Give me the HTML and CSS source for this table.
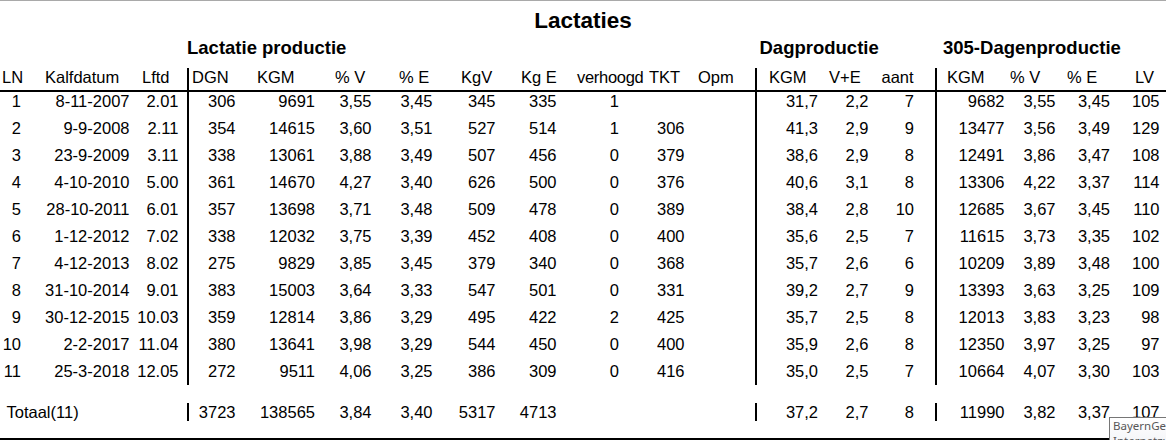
FILE: index.html
```html
<!DOCTYPE html>
<html lang="nl">
<head>
<meta charset="utf-8">
<title>Lactaties</title>
<link rel="stylesheet" href="styles.css">
</head>
<body>
<div class="page">
  <h1 class="title">Lactaties</h1>
  <div class="groups">
    <span></span>
    <span class="g-lact">Lactatie productie</span>
    <span class="g-dag">Dagproductie</span>
    <span class="g-305">305-Dagenproductie</span>
  </div>
  <div class="row head">
    <span>LN</span><span>Kalfdatum</span><span>Lftd</span><span>DGN</span><span>KGM</span><span>% V</span><span>% E</span><span>KgV</span><span>Kg E</span><span>verhoogd</span><span>TKT</span><span>Opm</span><span>KGM</span><span>V+E</span><span>aant</span><span>KGM</span><span>% V</span><span>% E</span><span>LV</span>
  </div>
  <div class="row data"><span>1</span><span>8-11-2007</span><span>2.01</span><span>306</span><span>9691</span><span>3,55</span><span>3,45</span><span>345</span><span>335</span><span>1</span><span></span><span></span><span>31,7</span><span>2,2</span><span>7</span><span>9682</span><span>3,55</span><span>3,45</span><span>105</span></div>
  <div class="row data"><span>2</span><span>9-9-2008</span><span>2.11</span><span>354</span><span>14615</span><span>3,60</span><span>3,51</span><span>527</span><span>514</span><span>1</span><span>306</span><span></span><span>41,3</span><span>2,9</span><span>9</span><span>13477</span><span>3,56</span><span>3,49</span><span>129</span></div>
  <div class="row data"><span>3</span><span>23-9-2009</span><span>3.11</span><span>338</span><span>13061</span><span>3,88</span><span>3,49</span><span>507</span><span>456</span><span>0</span><span>379</span><span></span><span>38,6</span><span>2,9</span><span>8</span><span>12491</span><span>3,86</span><span>3,47</span><span>108</span></div>
  <div class="row data"><span>4</span><span>4-10-2010</span><span>5.00</span><span>361</span><span>14670</span><span>4,27</span><span>3,40</span><span>626</span><span>500</span><span>0</span><span>376</span><span></span><span>40,6</span><span>3,1</span><span>8</span><span>13306</span><span>4,22</span><span>3,37</span><span>114</span></div>
  <div class="row data"><span>5</span><span>28-10-2011</span><span>6.01</span><span>357</span><span>13698</span><span>3,71</span><span>3,48</span><span>509</span><span>478</span><span>0</span><span>389</span><span></span><span>38,4</span><span>2,8</span><span>10</span><span>12685</span><span>3,67</span><span>3,45</span><span>110</span></div>
  <div class="row data"><span>6</span><span>1-12-2012</span><span>7.02</span><span>338</span><span>12032</span><span>3,75</span><span>3,39</span><span>452</span><span>408</span><span>0</span><span>400</span><span></span><span>35,6</span><span>2,5</span><span>7</span><span>11615</span><span>3,73</span><span>3,35</span><span>102</span></div>
  <div class="row data"><span>7</span><span>4-12-2013</span><span>8.02</span><span>275</span><span>9829</span><span>3,85</span><span>3,45</span><span>379</span><span>340</span><span>0</span><span>368</span><span></span><span>35,7</span><span>2,6</span><span>6</span><span>10209</span><span>3,89</span><span>3,48</span><span>100</span></div>
  <div class="row data"><span>8</span><span>31-10-2014</span><span>9.01</span><span>383</span><span>15003</span><span>3,64</span><span>3,33</span><span>547</span><span>501</span><span>0</span><span>331</span><span></span><span>39,2</span><span>2,7</span><span>9</span><span>13393</span><span>3,63</span><span>3,25</span><span>109</span></div>
  <div class="row data"><span>9</span><span>30-12-2015</span><span>10.03</span><span>359</span><span>12814</span><span>3,86</span><span>3,29</span><span>495</span><span>422</span><span>2</span><span>425</span><span></span><span>35,7</span><span>2,5</span><span>8</span><span>12013</span><span>3,83</span><span>3,23</span><span>98</span></div>
  <div class="row data"><span>10</span><span>2-2-2017</span><span>11.04</span><span>380</span><span>13641</span><span>3,98</span><span>3,29</span><span>544</span><span>450</span><span>0</span><span>400</span><span></span><span>35,9</span><span>2,6</span><span>8</span><span>12350</span><span>3,97</span><span>3,25</span><span>97</span></div>
  <div class="row data last"><span>11</span><span>25-3-2018</span><span>12.05</span><span>272</span><span>9511</span><span>4,06</span><span>3,25</span><span>386</span><span>309</span><span>0</span><span>416</span><span></span><span>35,0</span><span>2,5</span><span>7</span><span>10664</span><span>4,07</span><span>3,30</span><span>103</span></div>
  <div class="row data total"><span class="label">Totaal(11)</span><span></span><span></span><span>3723</span><span>138565</span><span>3,84</span><span>3,40</span><span>5317</span><span>4713</span><span></span><span></span><span></span><span>37,2</span><span>2,7</span><span>8</span><span>11990</span><span>3,82</span><span>3,37</span><span>107</span></div>
  <div class="rule"></div>
  <div class="tooltip">BayernGenetik<br>Internetzugang</div>
</div>
</body>
</html>
```
FILE: styles.css
```css
html, body {
  margin: 0;
  padding: 0;
  overflow: hidden;
  background: #fff;
}

body {
  font-family: "Liberation Sans", Arial, sans-serif;
  font-size: 16.5px;
  color: #000;
}

.page {
  position: relative;
  height: 440px;
  box-sizing: border-box;
  border-top: 1px solid #a9a9a9;
}

.title {
  margin: 7px 0 0;
  font-size: 22.5px;
  line-height: 26px;
  font-weight: bold;
  text-align: center;
}

.groups {
  display: grid;
  grid-template-columns: 187px 568px 180px 1fr;
  height: 34px;
  box-sizing: border-box;
  padding-top: 3px;
  font-size: 18.5px;
  line-height: 22px;
  font-weight: bold;
  white-space: nowrap;
}

.g-lact { padding-left: 0; }
.g-dag { padding-left: 4.5px; }
.g-305 { padding-left: 8px; }

.row {
  display: grid;
  grid-template-columns: 26px 107px 54px 53px 80px 60px 60px 60px 65px 80px 45px 65px 70px 50px 60px 75px 54px 54px 48px;
  line-height: 19px;
  white-space: nowrap;
}

.row > span {
  min-width: 0;
}

.row > span:nth-child(4),
.row > span:nth-child(13),
.row > span:nth-child(16) {
  border-left: 2px solid #000;
}

/* header row */
.head {
  height: 22px;
  border-bottom: 2px solid #000;
}

.head > span { text-align: left; }
.head > span:nth-child(1)  { padding-left: 2px; }
.head > span:nth-child(2)  { padding-left: 19px; }
.head > span:nth-child(3)  { padding-left: 9px; }
.head > span:nth-child(4)  { padding-left: 3px; }
.head > span:nth-child(5)  { padding-left: 17px; }
.head > span:nth-child(6)  { padding-left: 15px; }
.head > span:nth-child(7)  { padding-left: 19px; }
.head > span:nth-child(8)  { padding-left: 21px; }
.head > span:nth-child(9)  { padding-left: 21px; }
.head > span:nth-child(10) { padding-left: 12px; letter-spacing: -0.3px; }
.head > span:nth-child(11) { padding-left: 4px; }
.head > span:nth-child(12) { padding-left: 8px; }
.head > span:nth-child(13) { padding-left: 12px; }
.head > span:nth-child(14) { padding-left: 4px; }
.head > span:nth-child(15) { padding-left: 6.5px; }
.head > span:nth-child(16) { padding-left: 10px; }
.head > span:nth-child(17) { padding-left: 0; }
.head > span:nth-child(18) { padding-left: 3px; }
.head > span:nth-child(19) { padding-left: 17px; }

/* data rows */
.data {
  height: 27px;
}

.data.last {
  height: 23px;
}

.data > span { text-align: right; }
.data > span:nth-child(1)  { padding-right: 5px; }
.data > span:nth-child(2)  { padding-right: 3.5px; }
.data > span:nth-child(3)  { padding-right: 8.5px; }
.data > span:nth-child(4)  { padding-right: 4.5px; }
.data > span:nth-child(5)  { padding-right: 5px; }
.data > span:nth-child(6)  { padding-right: 8.5px; }
.data > span:nth-child(7)  { padding-right: 7.5px; }
.data > span:nth-child(8)  { padding-right: 4.5px; }
.data > span:nth-child(9)  { padding-right: 8.5px; }
.data > span:nth-child(10) { padding-right: 26px; }
.data > span:nth-child(11) { padding-right: 5.5px; }
.data > span:nth-child(12) { padding-right: 5px; }
.data > span:nth-child(13) { padding-right: 7px; }
.data > span:nth-child(14) { padding-right: 6.5px; }
.data > span:nth-child(15) { padding-right: 21px; }
.data > span:nth-child(16) { padding-right: 5.5px; }
.data > span:nth-child(17) { padding-right: 8.5px; }
.data > span:nth-child(18) { padding-right: 8px; }
.data > span:nth-child(19) { padding-right: 6.5px; }

/* total row */
.data.total {
  margin-top: 14px;
  height: 22px;
  box-sizing: border-box;
  padding-top: 4px;
  line-height: 18px;
}

.row.data.total > .label {
  text-align: left;
  padding-left: 6.5px;
  padding-right: 0;
  overflow: visible;
}

.rule {
  margin-top: 17px;
  border-top: 2px solid #000;
}

/* tooltip overlay */
.tooltip {
  position: absolute;
  left: 1109px;
  top: 416px;
  width: 110px;
  height: 40px;
  box-sizing: border-box;
  padding: 0 3px;
  border: 1px solid #767676;
  background: linear-gradient(#ffffff, #eeeff4);
  font-family: "Segoe UI", "Noto Sans", sans-serif;
  font-size: 11.5px;
  line-height: 15px;
  color: #575757;
  white-space: nowrap;
}
```
